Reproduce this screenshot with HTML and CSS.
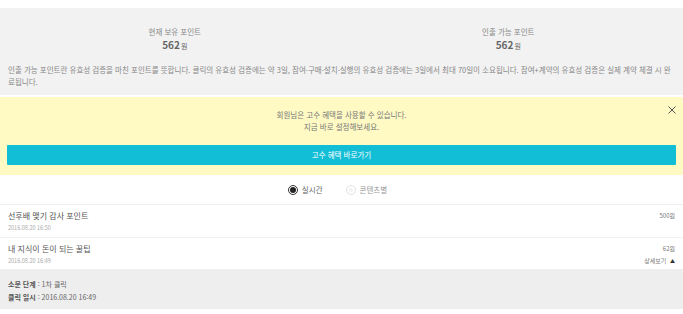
FILE: index.html
```html
<!DOCTYPE html>
<html lang="ko">
<head>
<meta charset="utf-8">
<link rel="stylesheet" href="styles.css">
</head>
<body>
<div class="page">
  <section class="summary">
    <div class="stats">
      <div class="stat">
        <div class="stat-label">현재 보유 포인트</div>
        <div class="stat-value">562<span class="unit">원</span></div>
      </div>
      <div class="stat">
        <div class="stat-label">인출 가능 포인트</div>
        <div class="stat-value">562<span class="unit">원</span></div>
      </div>
    </div>
    <p class="desc">인출 가능 포인트란 유효성 검증을 마친 포인트를 뜻합니다. 클릭의 유효성 검증에는 약 3일, 참여·구매·설치·실행의 유효성 검증에는 3일에서 최대 70일이 소요됩니다. 참여+계약의 유효성 검증은 실제 계약 체결 시 완료됩니다.</p>
  </section>
  <section class="banner">
    <button class="close" aria-label="닫기">
      <svg width="8" height="8" viewBox="0 0 8 8"><path d="M0.5 0.5L7.5 7.5M7.5 0.5L0.5 7.5" stroke="#555" stroke-width="1" fill="none"/></svg>
    </button>
    <p class="banner-text">회원님은 고수 혜택을 사용할 수 있습니다.<br>지금 바로 설정해보세요.</p>
    <a class="banner-btn">고수 혜택 바로가기</a>
  </section>
  <div class="tabs">
    <label class="radio checked"><span class="dot"></span>실시간</label>
    <label class="radio disabled"><span class="dot"></span>콘텐츠별</label>
  </div>
  <ul class="list">
    <li class="item">
      <div class="item-main">
        <div class="item-title">선후배 맺기 감사 포인트</div>
        <div class="item-date">2016.08.20 16:50</div>
      </div>
      <div class="item-side">
        <div class="item-amount">500원</div>
      </div>
    </li>
    <li class="item">
      <div class="item-main">
        <div class="item-title">내 지식이 돈이 되는 꿀팁</div>
        <div class="item-date">2016.08.20 16:49</div>
      </div>
      <div class="item-side">
        <div class="item-amount">62원</div>
        <div class="item-more">상세보기 <span class="tri">▲</span></div>
      </div>
    </li>
  </ul>
  <div class="detail">
    <div class="detail-row"><b>소문 단계</b> : 1차 클릭</div>
    <div class="detail-row"><b>클릭 일시</b> : 2016.08.20 16:49</div>
  </div>
</div>
</body>
</html>
```
FILE: styles.css
```css
* { box-sizing: border-box; }
html, body { margin: 0; padding: 0; background: #fff; }
body {
  font-family: "Noto Sans CJK KR", "Noto Sans", sans-serif;
  color: #777;
  font-size: 7px;
}
.page { padding-top: 8px; }
.summary {
  background: #f2f2f2;
  padding: 18px 8px 7px;
}
.stats { display: grid; grid-template-columns: 1fr 1fr; }
.stat { text-align: center; }
.stat-label { font-size: 7.5px; line-height: 12px; color: #888; }
.stat-value { font-size: 10px; font-weight: bold; color: #666; line-height: 14px; }
.unit { font-size: 7px; font-weight: normal; margin-left: 1px; }
.desc { margin: 11px -2px 0 0; font-size: 7.5px; line-height: 12px; color: #888; }
.banner {
  margin-top: 2px;
  background: #fffac4;
  position: relative;
  padding: 12px 7px 10px 7px;
  text-align: center;
}
.close {
  position: absolute; top: 9px; right: 7px;
  border: 0; background: none; padding: 0; width: 8px; height: 8px; display: block;
}
.close svg { display: block; }
.banner-text { margin: 0; font-size: 7.5px; line-height: 12px; color: #777; }
.banner-btn {
  display: block;
  margin-top: 12px;
  background: #12bdd6;
  color: #fff;
  height: 20px;
  line-height: 20px;
  font-size: 7.5px;
  border-radius: 1px;
}
.tabs {
  display: flex; justify-content: center; gap: 23px;
  height: 30px; align-items: center;
  border-bottom: 1px solid #eee;
  padding-right: 8px;
}
.radio { display: flex; align-items: center; gap: 4px; font-size: 7.5px; color: #666; }
.radio .dot {
  width: 10px; height: 10px; border-radius: 50%;
  border: 1px solid #333; display: flex; align-items: center; justify-content: center;
}
.radio.checked .dot::after { content: ""; width: 6px; height: 6px; border-radius: 50%; background: #222; }
.radio.disabled { color: #999; }
.radio.disabled .dot { border-color: #e2e2e2; }
.radio.disabled .dot::after { content: ""; width: 4px; height: 4px; border-radius: 50%; background: #f3f3f3; }
.list { list-style: none; margin: 0; padding: 0; }
.item {
  display: flex; justify-content: space-between;
  padding: 5px 8px 5px 8px;
  height: 33px;
  border-bottom: 1px solid #f0f0f0;
}
.item:last-child { border-bottom: 0; height: 31px; }
.item-title { font-size: 8px; line-height: 12px; color: #555; }
.item-date { font-size: 5.5px; line-height: 12px; color: #aaa; }
.item-side { text-align: right; }
.item-amount { font-size: 6px; line-height: 12px; color: #777; }
.item-more { font-size: 6px; line-height: 12px; color: #777; }
.tri { font-size: 5px; color: #333; margin-left: 2px; }
.detail {
  background: #eeeeee;
  padding: 9px 8px 7px;
  height: 40px;
}
.detail-row { font-size: 7px; line-height: 13px; color: #666; }
.detail-row b { color: #555; }
```
